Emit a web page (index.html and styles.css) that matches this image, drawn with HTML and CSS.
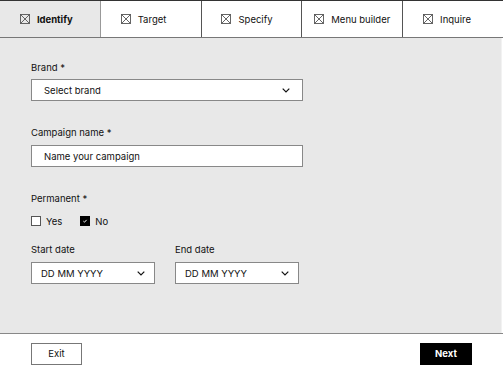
FILE: index.html
```html
<!DOCTYPE html>
<html>
<head>
<meta charset="utf-8">
<link rel="stylesheet" href="styles.css">
</head>
<body>
<div class="page">
  <nav class="tabs">
    <div class="tab active"><span class="tab-inner"><svg class="ico" viewBox="0 0 10 10"><rect x="0.5" y="0.5" width="9" height="9"/><path d="M0.5 0.5L9.5 9.5M9.5 0.5L0.5 9.5"/></svg>Identify</span></div>
    <div class="tab"><span class="tab-inner"><svg class="ico" viewBox="0 0 10 10"><rect x="0.5" y="0.5" width="9" height="9"/><path d="M0.5 0.5L9.5 9.5M9.5 0.5L0.5 9.5"/></svg>Target</span></div>
    <div class="tab"><span class="tab-inner"><svg class="ico" viewBox="0 0 10 10"><rect x="0.5" y="0.5" width="9" height="9"/><path d="M0.5 0.5L9.5 9.5M9.5 0.5L0.5 9.5"/></svg>Specify</span></div>
    <div class="tab"><span class="tab-inner"><svg class="ico" viewBox="0 0 10 10"><rect x="0.5" y="0.5" width="9" height="9"/><path d="M0.5 0.5L9.5 9.5M9.5 0.5L0.5 9.5"/></svg>Menu builder</span></div>
    <div class="tab"><span class="tab-inner"><svg class="ico" viewBox="0 0 10 10"><rect x="0.5" y="0.5" width="9" height="9"/><path d="M0.5 0.5L9.5 9.5M9.5 0.5L0.5 9.5"/></svg>Inquire</span></div>
  </nav>
  <main class="content">
    <div class="field">
      <label class="label">Brand *</label>
      <div class="box select wide"><span>Select brand</span><svg class="chev" viewBox="0 0 8 5"><path d="M0.7 0.7L4 4L7.3 0.7"/></svg></div>
    </div>
    <div class="field">
      <label class="label">Campaign name *</label>
      <div class="box wide"><span>Name your campaign</span></div>
    </div>
    <div class="field perm">
      <label class="label">Permanent *</label>
      <div class="checks">
        <span class="check"><span class="cb"></span>Yes</span>
        <span class="check"><span class="cb on"><svg viewBox="0 0 10 10"><path d="M3 5.2L4.4 6.5L7 3.6"/></svg></span>No</span>
      </div>
    </div>
    <div class="dates">
      <div class="field">
        <label class="label">Start date</label>
        <div class="box select date"><span>DD MM YYYY</span><svg class="chev" viewBox="0 0 8 5"><path d="M0.7 0.7L4 4L7.3 0.7"/></svg></div>
      </div>
      <div class="field">
        <label class="label">End date</label>
        <div class="box select date"><span>DD MM YYYY</span><svg class="chev" viewBox="0 0 8 5"><path d="M0.7 0.7L4 4L7.3 0.7"/></svg></div>
      </div>
    </div>
  </main>
  <footer class="footer">
    <button class="btn">Exit</button>
    <button class="btn primary">Next</button>
  </footer>
</div>
</body>
</html>
```

FILE: styles.css
```css
* { box-sizing: border-box; }
html, body { margin: 0; padding: 0; }
body {
  font-family: Inter, "Liberation Sans", sans-serif;
  font-size: 9.5px;
  color: #111;
  background: #fff;
}
.page {
  width: 503px;
  height: 373px;
  display: flex;
  flex-direction: column;
}
.tabs {
  display: flex;
  height: 38px;
  border-top: 1px solid #333;
  border-bottom: 1px solid #777;
  background: #fff;
}
.tab {
  flex: 1;
  display: flex;
  align-items: center;
  justify-content: center;
  border-right: 1px solid #555;
}
.tab:last-child { border-right: none; }
.tab.active {
  background: #e8e8e8;
  font-weight: 700;
  border-right-color: #999;
}
.tab-inner {
  display: inline-flex;
  align-items: center;
  min-width: 60px;
  white-space: nowrap;
}
.ico {
  width: 10px;
  height: 10px;
  margin-right: 7px;
  fill: none;
  stroke: #555;
  stroke-width: 0.9;
}
.content {
  flex: 1;
  background: #e8e8e8;
  padding: 24px 0 0 31px;
  border-right: 1px solid #f2f2f2;
  margin-right: 1px;
}
.field { display: flex; flex-direction: column; }
.field + .field { margin-top: 26px; }
.label { line-height: 12px; margin-bottom: 5px; }
.box {
  height: 22px;
  background: #fff;
  border: 1px solid #888;
  display: flex;
  align-items: center;
  padding: 0 12px;
}
.field + .field .label { margin-bottom: 6px; }
.box.wide { width: 272px; }
.box.date { width: 124px; padding: 0 9px; }
.select { justify-content: space-between; }
.chev {
  width: 8px;
  height: 5px;
  fill: none;
  stroke: #111;
  stroke-width: 1.2;
}
.perm { margin-top: 25px; }
.checks {
  display: flex;
  gap: 18px;
  margin-top: 4px;
}
.check { display: inline-flex; align-items: center; gap: 5px; height: 12px; }
.cb {
  width: 10px;
  height: 10px;
  border: 1px solid #555;
  background: #fff;
  display: inline-flex;
}
.cb.on { background: #000; border-color: #000; }
.cb svg { width: 100%; height: 100%; fill: none; stroke: #fff; stroke-width: 1.2; }
.dates { display: flex; gap: 20px; margin-top: 17px; }
.dates .field + .field { margin-top: 0; }
.dates .label { margin-bottom: 6px; }
.footer {
  height: 40px;
  border-top: 1px solid #888;
  display: flex;
  align-items: center;
  justify-content: space-between;
  padding: 0 31px;
}
.btn {
  width: 51px;
  height: 22px;
  font-family: Inter, "Liberation Sans", sans-serif;
  font-size: 9.5px;
  background: #fff;
  border: 1px solid #777;
  color: #111;
  padding: 0;
}
.btn.primary {
  background: #000;
  border-color: #000;
  color: #fff;
  font-weight: 700;
  width: 52px;
}
```
